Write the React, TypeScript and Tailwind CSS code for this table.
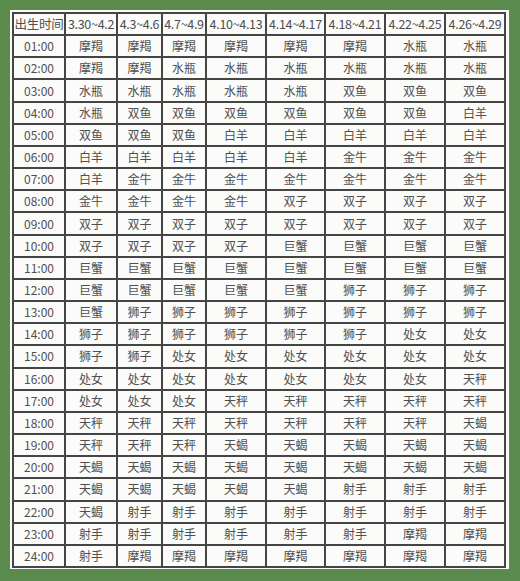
const header = [
  "出生时间",
  "3.30~4.2",
  "4.3~4.6",
  "4.7~4.9",
  "4.10~4.13",
  "4.14~4.17",
  "4.18~4.21",
  "4.22~4.25",
  "4.26~4.29",
];

const rows: string[][] = [
  ["01:00", "摩羯", "摩羯", "摩羯", "摩羯", "摩羯", "摩羯", "水瓶", "水瓶"],
  ["02:00", "摩羯", "摩羯", "水瓶", "水瓶", "水瓶", "水瓶", "水瓶", "水瓶"],
  ["03:00", "水瓶", "水瓶", "水瓶", "水瓶", "水瓶", "双鱼", "双鱼", "双鱼"],
  ["04:00", "水瓶", "双鱼", "双鱼", "双鱼", "双鱼", "双鱼", "双鱼", "白羊"],
  ["05:00", "双鱼", "双鱼", "双鱼", "白羊", "白羊", "白羊", "白羊", "白羊"],
  ["06:00", "白羊", "白羊", "白羊", "白羊", "白羊", "金牛", "金牛", "金牛"],
  ["07:00", "白羊", "金牛", "金牛", "金牛", "金牛", "金牛", "金牛", "金牛"],
  ["08:00", "金牛", "金牛", "金牛", "金牛", "双子", "双子", "双子", "双子"],
  ["09:00", "双子", "双子", "双子", "双子", "双子", "双子", "双子", "双子"],
  ["10:00", "双子", "双子", "双子", "双子", "巨蟹", "巨蟹", "巨蟹", "巨蟹"],
  ["11:00", "巨蟹", "巨蟹", "巨蟹", "巨蟹", "巨蟹", "巨蟹", "巨蟹", "巨蟹"],
  ["12:00", "巨蟹", "巨蟹", "巨蟹", "巨蟹", "巨蟹", "狮子", "狮子", "狮子"],
  ["13:00", "巨蟹", "狮子", "狮子", "狮子", "狮子", "狮子", "狮子", "狮子"],
  ["14:00", "狮子", "狮子", "狮子", "狮子", "狮子", "狮子", "处女", "处女"],
  ["15:00", "狮子", "狮子", "处女", "处女", "处女", "处女", "处女", "处女"],
  ["16:00", "处女", "处女", "处女", "处女", "处女", "处女", "处女", "天秤"],
  ["17:00", "处女", "处女", "处女", "天秤", "天秤", "天秤", "天秤", "天秤"],
  ["18:00", "天秤", "天秤", "天秤", "天秤", "天秤", "天秤", "天秤", "天蝎"],
  ["19:00", "天秤", "天秤", "天秤", "天蝎", "天蝎", "天蝎", "天蝎", "天蝎"],
  ["20:00", "天蝎", "天蝎", "天蝎", "天蝎", "天蝎", "天蝎", "天蝎", "天蝎"],
  ["21:00", "天蝎", "天蝎", "天蝎", "天蝎", "天蝎", "射手", "射手", "射手"],
  ["22:00", "天蝎", "射手", "射手", "射手", "射手", "射手", "射手", "射手"],
  ["23:00", "射手", "射手", "射手", "射手", "射手", "射手", "摩羯", "摩羯"],
  ["24:00", "射手", "摩羯", "摩羯", "摩羯", "摩羯", "摩羯", "摩羯", "摩羯"],
];

function Cell({ text, head }: { text: string; head?: boolean }) {
  return (
    <div
      className={
        "flex items-center justify-center bg-[#fbfbfa] whitespace-nowrap leading-none text-[#4f4f4f] " +
        (head ? "text-[12.5px] tracking-[-0.3px]" : "text-[12px]")
      }
    >
      {text}
    </div>
  );
}

export default function App() {
  return (
    <div className="w-[520px] h-[581px] bg-[#5b8a4d] pt-[10px] pl-[10px] font-['Noto_Sans_CJK_SC',sans-serif]">
      <div className="w-[499px] h-[559px] bg-[#fbfbfa] pt-[2px] pl-[2px]">
        <div className="grid h-[556px] w-[494px] grid-cols-[50px_50px_43px_42px_58px_57px_58px_58px_58px] grid-rows-[repeat(25,1fr)] gap-[2px] border-2 border-[#454545] bg-[#454545]">
          {header.map((h) => (
            <Cell key={h} text={h} head />
          ))}
          {rows.map((r) =>
            r.map((c, i) => <Cell key={r[0] + i} text={c} />)
          )}
        </div>
      </div>
    </div>
  );
}
